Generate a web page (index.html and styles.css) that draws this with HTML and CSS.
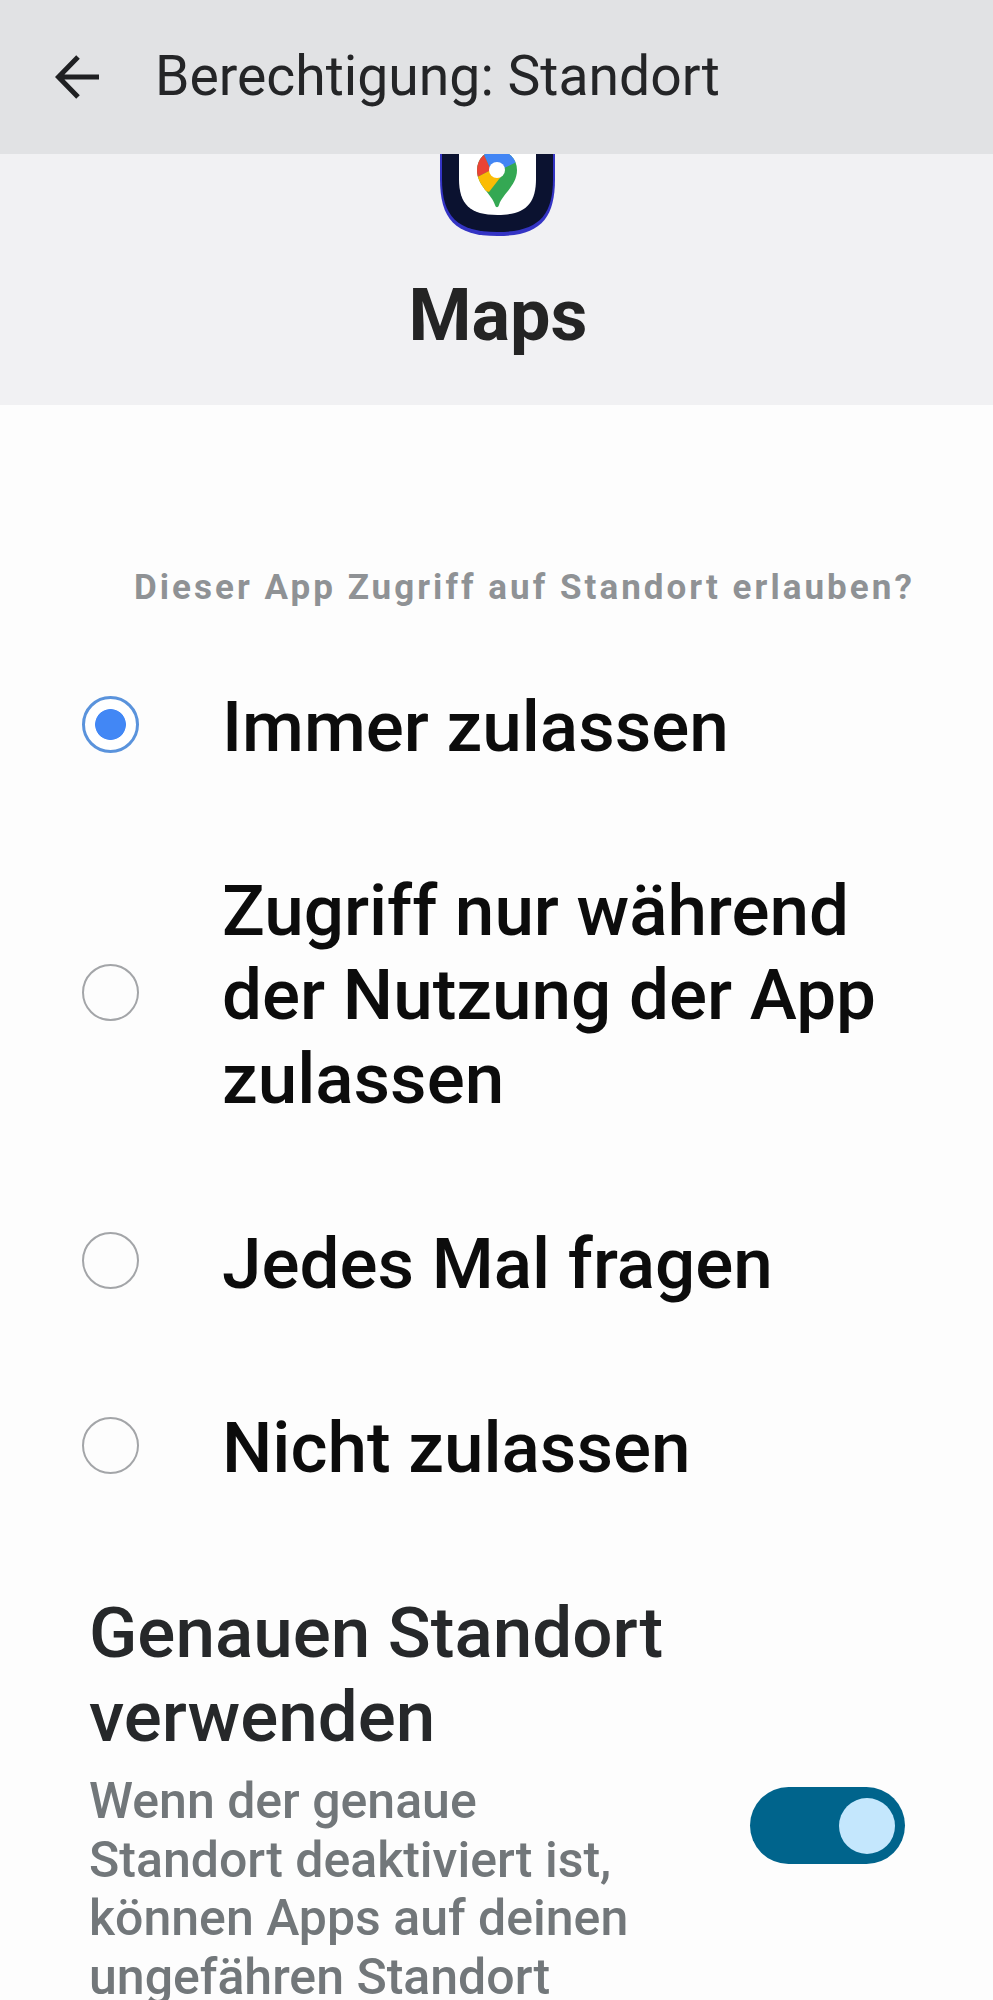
FILE: index.html
```html
<!DOCTYPE html>
<html lang="de">
<head>
<meta charset="utf-8">
<title>Berechtigung: Standort</title>
<link rel="stylesheet" href="styles.css">
</head>
<body>
<div class="page">
  <header class="topbar">
    <svg class="back" viewBox="0 0 46 46" width="46" height="46" aria-hidden="true"><path d="M44 23H4M23 3 3.5 23 23 43" fill="none" stroke="#1f2022" stroke-width="5"/></svg>
    <h1 class="title">Berechtigung: Standort</h1>
  </header>
  <section class="hero">
    <svg class="appicon" viewBox="0 0 115 82" width="115" height="82" aria-hidden="true">
      <defs><clipPath id="pin"><path d="M37 14A20 20 0 0 1 77 14C77 30 62 38 59 49 58 52 56 52 55 49 52 38 37 30 37 14Z"/></clipPath></defs>
      <path d="M0-40V25C0 65 15 82 57.5 82 100 82 115 65 115 25V-40Z" fill="#3434c4"/>
      <path d="M2-40V25C2 62 17 78 57.5 78 98 78 113 62 113 25V-40Z" fill="#0b1230"/>
      <path d="M19-40V25C19 50 30 61 57.5 61 85 61 96 50 96 25V-40Z" fill="#fff"/>
      <g transform="translate(0 2)">
        <g clip-path="url(#pin)">
          <rect x="30" y="-10" width="55" height="70" fill="#34a853"/>
          <polygon points="30,-10 40,-10 51,14 30,25" fill="#ea4335"/>
          <polygon points="51,14 63,18 49,36 30,30 30,25" fill="#fbbc04"/>
          <polygon points="40,-10 85,-10 85,2 60,14 51,14" fill="#4285f4"/>
        </g>
        <circle cx="57" cy="14" r="8" fill="#fff"/>
      </g>
    </svg>
    <div class="appname">Maps</div>
  </section>
  <main class="content">
    <p class="question">Dieser App Zugriff auf Standort erlauben?</p>
    <div class="options">
      <div class="option"><span class="radio radio-on"></span><span class="label">Immer zulassen</span></div>
      <div class="option"><span class="radio"></span><span class="label">Zugriff nur während der Nutzung der App zulassen</span></div>
      <div class="option"><span class="radio"></span><span class="label">Jedes Mal fragen</span></div>
      <div class="option"><span class="radio"></span><span class="label">Nicht zulassen</span></div>
    </div>
    <div class="precise">
      <div class="precise-text">
        <div class="precise-title">Genauen Standort verwenden</div>
        <div class="precise-body">
          <p class="precise-desc">Wenn der genaue Standort deaktiviert ist, können Apps auf deinen ungefähren Standort</p>
          <span class="switch"><span class="knob"></span></span>
        </div>
      </div>
    </div>
  </main>
</div>
</body>
</html>
```
FILE: styles.css
```css
html, body { margin: 0; padding: 0; height: 2000px; overflow: hidden; background: #fdfdfd; }
body { font-family: Roboto, "Liberation Sans", sans-serif; }
.page { width: 993px; height: 2000px; overflow: hidden; }
.topbar { position: relative; z-index: 1; height: 154px; background: #e1e2e4; display: flex; align-items: center; padding-left: 55px; box-sizing: border-box; }
.back { flex: none; }
.title { margin: 0 0 0 54px; font-size: 55.3px; font-weight: 400; color: #242527; line-height: 1; }
.hero { height: 251px; background: #f1f1f3; display: flex; flex-direction: column; align-items: center; }
.appicon { display: block; margin-left: 1px; overflow: hidden; }
.appname { margin-top: 38px; padding-left: 3px; font-size: 72px; font-weight: 700; line-height: 84px; color: #242424; }
.content { padding: 0 88px 0 0; }
.question { margin: 161px 0 0 134px; font-size: 35px; font-weight: 700; letter-spacing: 3.03px; line-height: 44px; color: #8f9295; white-space: nowrap; }
.options { margin-top: 72px; display: flex; flex-direction: column; gap: 100.4px; }
.option { display: flex; align-items: center; padding-left: 82px; }
.radio { flex: none; width: 57px; height: 57px; box-sizing: border-box; border: 2px solid #a3a5a8; border-radius: 50%; background: #fdfdfd; }
.radio-on { border: 3px solid #5a93dc; background: radial-gradient(circle, #4287f5 0 15px, #fff 15.8px); }
.label { margin: 0 0 -3px 83px; padding-top: 3px; font-size: 71px; font-weight: 500; line-height: 84px; color: #0c0c0c; }
.precise { margin-top: 104px; padding-left: 89px; }
.precise-title { font-size: 71px; font-weight: 500; line-height: 84px; color: #26282a; width: 640px; }
.precise-body { display: flex; align-items: flex-start; }
.precise-desc { margin: 13px 0 0; width: 560px; font-size: 50px; line-height: 58.5px; font-weight: 500; color: #72777a; }
.switch { flex: none; margin: 28px 0 0 112px; width: 155px; height: 77px; border-radius: 39px; background: #00648c; display: flex; align-items: center; justify-content: flex-end; padding-right: 10px; box-sizing: border-box; }
.knob { width: 56px; height: 56px; border-radius: 50%; background: #c4e7fd; }
```
